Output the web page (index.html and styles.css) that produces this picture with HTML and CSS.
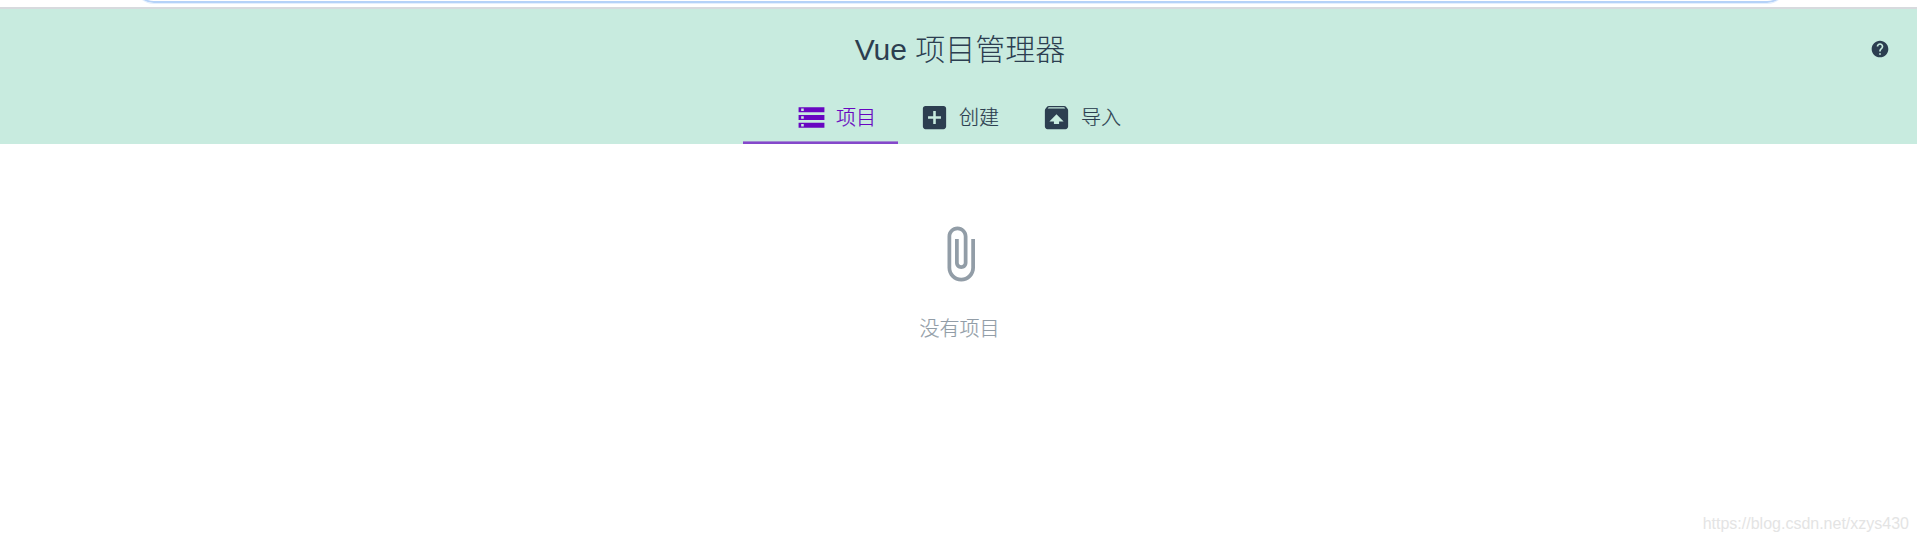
FILE: index.html
```html
<!DOCTYPE html>
<html lang="zh-CN">
<head>
<meta charset="utf-8">
<title>Vue 项目管理器</title>
<link rel="stylesheet" href="styles.css">
</head>
<body>
<div class="browser-edge"><div class="address-bar"></div></div>
<header class="header">
  <div class="title-row">
    <h1 class="title"><span class="latin">Vue</span> 项目管理器</h1>
    <svg class="help" viewBox="0 0 24 24"><path d="M12 2C6.48 2 2 6.48 2 12s4.48 10 10 10 10-4.48 10-10S17.52 2 12 2zm1 17h-2v-2h2v2zm2.07-7.75l-.9.92C13.45 12.9 13 13.5 13 15h-2v-.5c0-1.1.45-2.1 1.17-2.83l1.24-1.26c.37-.36.59-.86.59-1.41 0-1.1-.9-2-2-2s-2 .9-2 2H8c0-2.21 1.79-4 4-4s4 1.79 4 4c0 .88-.36 1.68-.93 2.25z"/></svg>
  </div>
  <nav class="tabs">
    <a class="tab active"><svg class="icon" viewBox="0 0 24 24"><path d="M2 20h20v-4H2v4zm2-3h2v2H4v-2zM2 4v4h20V4H2zm4 3H4V5h2v2zm-4 7h20v-4H2v4zm2-3h2v2H4v-2z"/></svg><span class="label">项目</span></a>
    <a class="tab"><svg class="icon" viewBox="0 0 24 24"><path d="M19 3H5c-1.11 0-2 .9-2 2v14c0 1.1.89 2 2 2h14c1.1 0 2-.9 2-2V5c0-1.1-.9-2-2-2zm-2 10h-4v4h-2v-4H7v-2h4V7h2v4h4v2z"/></svg><span class="label">创建</span></a>
    <a class="tab"><svg class="icon" viewBox="0 0 24 24"><path d="M20.55 5.22l-1.39-1.68C18.88 3.21 18.47 3 18 3H6c-.47 0-.88.21-1.15.55L3.46 5.22C3.17 5.57 3 6.01 3 6.5V19c0 1.1.89 2 2 2h14c1.1 0 2-.9 2-2V6.5c0-.49-.17-.93-.45-1.28zM12 9.5l5.5 5.5H14v2h-4v-2H6.5L12 9.5zM5.12 5l.82-1h12l.93 1H5.12z"/></svg><span class="label">导入</span></a>
  </nav>
</header>
<main class="empty">
  <svg class="clip" viewBox="0 0 24 24"><path d="M16.5 6v11.5c0 2.21-1.79 4-4 4s-4-1.79-4-4V5c0-1.38 1.12-2.5 2.5-2.5s2.5 1.12 2.5 2.5v10.5c0 .55-.45 1-1 1s-1-.45-1-1V6H10v9.5c0 1.38 1.12 2.5 2.5 2.5s2.5-1.12 2.5-2.5V5c0-2.21-1.79-4-4-4S7 2.79 7 5v12.5c0 3.04 2.46 5.5 5.5 5.5s5.5-2.46 5.5-5.5V6H16.5z"/></svg>
  <p class="empty-text">没有项目</p>
</main>
<footer class="watermark">https://blog.csdn.net/xzys430</footer>
</body>
</html>
```
FILE: styles.css
```css
* { box-sizing: border-box; }
body {
  margin: 0;
  height: 542px;
  display: flex;
  flex-direction: column;
  overflow: hidden;
  background: #fff;
  color: #2c3e50;
  font-family: "Liberation Sans", "Noto Sans CJK SC", sans-serif;
  font-weight: 300;
}
svg { display: block; fill: currentColor; flex: none; }
.browser-edge {
  height: 7px;
  flex: none;
  display: flex;
  align-items: flex-start;
  padding: 0 130px 0 134px;
  overflow: hidden;
}
.address-bar {
  flex: 1;
  height: 40px;
  margin-top: -37px;
  border: 2px solid #b5d2f8;
  border-radius: 20px;
  box-shadow: 0 1px #e4effd;
}
.header {
  height: 137px;
  flex: none;
  border-top: 2px solid #d7dade;
  background: #c8ebdf;
}
.title-row {
  height: 80px;
  display: grid;
  grid-template-columns: 1fr auto 1fr;
  align-items: center;
  padding: 0 27px 0 30px;
}
.title {
  grid-column: 2;
  margin: 0;
  padding: 2px 0 0;
  font-size: 30px;
  line-height: 40px;
  font-weight: 300;
}
.latin { font-weight: 400; }
.help { width: 20px; height: 20px; justify-self: end; }
.tabs { height: 55px; display: flex; padding-left: 743px; }
.tab {
  height: 55px;
  display: flex;
  align-items: center;
  gap: 9px;
  padding: 1px 21px 0 21px;
  font-size: 20px;
  line-height: 28px;
}
.active {
  width: 155px;
  padding: 1px 0 0 53px;
  color: #6806c1;
  box-shadow: inset 0 -2px #8548cb, inset 0 -3px #a28ad2;
}
.label { padding-top: 2px; -webkit-text-stroke: 0.2px currentColor; }
.icon { width: 31px; height: 31px; }
.empty {
  flex: 1;
  display: flex;
  flex-direction: column;
  align-items: center;
  padding: 80px 0 0 2px;
  color: #929da7;
}
.clip { width: 60px; height: 60px; }
.empty-text {
  margin: 31px 0 0;
  font-size: 20px;
  line-height: 28px;
  -webkit-text-stroke: 0.2px currentColor;
}
.watermark {
  align-self: flex-end;
  padding: 0 8px 8px 0;
  font: 400 16px/20px "Liberation Sans", Arial, sans-serif;
  color: #e4e4e4;
}
```
